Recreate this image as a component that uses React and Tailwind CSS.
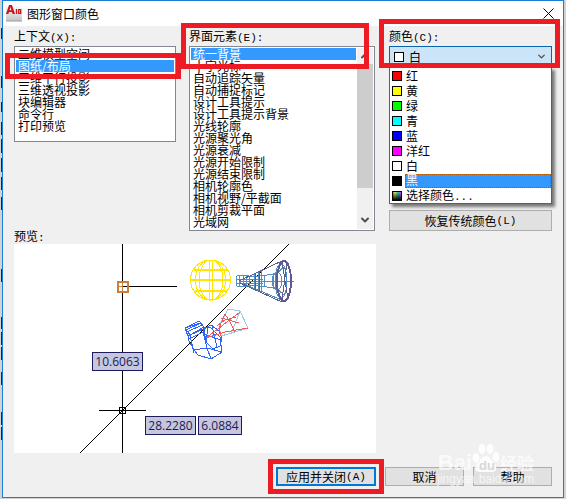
import React, { useState } from "react";
import { ChevronDown, ChevronUp } from "lucide-react";

const contexts = [
  "二维模型空间",
  "图纸/布局",
  "三维平行投影",
  "三维透视投影",
  "块编辑器",
  "命令行",
  "打印预览",
];

const elements = [
  "统一背景",
  "十字光标",
  "自动追踪矢量",
  "自动捕捉标记",
  "设计工具提示",
  "设计工具提示背景",
  "光线轮廓",
  "光源聚光角",
  "光源衰减",
  "光源开始限制",
  "光源结束限制",
  "相机轮廓色",
  "相机视野/平截面",
  "相机剪裁平面",
  "光域网",
];

const colors = [
  { name: "红", swatch: "bg-[#ff0000]" },
  { name: "黄", swatch: "bg-[#ffff00]" },
  { name: "绿", swatch: "bg-[#00ff00]" },
  { name: "青", swatch: "bg-[#00ffff]" },
  { name: "蓝", swatch: "bg-[#0000ff]" },
  { name: "洋红", swatch: "bg-[#ff00ff]" },
  { name: "白", swatch: "bg-white" },
  { name: "黑", swatch: "bg-black" },
  {
    name: "选择颜色",
    more: true,
    swatch:
      "bg-[linear-gradient(transparent,black),linear-gradient(90deg,#ff6060,#f0f060,#40e060,#40a0ff,#e040ff)]",
  },
];

// [top, height] of what shows of the drawing window behind the dialog
const marks = [
  [28, 11],
  [76, 12],
  [102, 10],
  [122, 13],
  [139, 14],
  [158, 14],
  [177, 13],
  [197, 13],
  [269, 13],
  [317, 12],
  [332, 13],
  [347, 13],
  [372, 13],
  [412, 13],
  [427, 13],
];

// Access key shown after a caption, e.g. (X):
function Key({ children }) {
  return <span className="font-['Liberation_Mono'] text-[11px]">{children}</span>;
}

function Highlight({ className }) {
  return (
    <div
      className={`pointer-events-none absolute z-20 border-[5px] border-[#ed1c24] ${className}`}
    />
  );
}

function ListBox({ labelledBy, items, value, onChange }) {
  return (
    <ul
      role="listbox"
      aria-labelledby={labelledBy}
      className="min-w-0 flex-1 overflow-hidden bg-white p-px"
    >
      {items.map((item) => (
        <li key={item} role="option" aria-selected={item === value}>
          <button
            onClick={() => onChange(item)}
            className={`block h-3 w-full pl-[2px] text-left leading-[10px] whitespace-nowrap ${
              item === value ? "bg-[#3399ff] text-white" : ""
            }`}
          >
            {item}
          </button>
        </li>
      ))}
    </ul>
  );
}

function DialogButton({ children, className }) {
  return (
    <button
      className={`flex items-center justify-center bg-[#e1e1e1] text-[12px] leading-[12px] whitespace-nowrap ${className}`}
    >
      {children}
    </button>
  );
}

function AppLogo() {
  return (
    <svg width="16" height="17" viewBox="0 0 16 17" aria-hidden="true">
      <defs>
        <linearGradient id="logo" x1="0" y1="0" x2="0" y2="1">
          <stop offset="0" stopColor="#fafafa" />
          <stop offset="1" stopColor="#c4c4c4" />
        </linearGradient>
      </defs>
      <path d="M0 1h13l3 3v12H0z" fill="url(#logo)" />
      <path d="M0 16h16" stroke="#9c9c9c" />
      <path
        d="M0 9L3 0h3l3 9H6.500L6 7H3l-.6 2zM3.500 5.300h2L4.500 2z"
        fill="#c9151e"
        fillRule="evenodd"
      />
      <path d="M10.500 4v5M12.700 4.700h2v3.600h-2z" fill="none" stroke="#c9151e" strokeWidth="1.3" />
    </svg>
  );
}

function Preview() {
  return (
    <svg width="362" height="209" viewBox="0 0 362 209" className="block" aria-hidden="true">
      <g fill="none" shapeRendering="crispEdges">
        <path d="M108.500 0V209M109 42.500H163M85 166.500H132" stroke="#000" />
        <rect x="105.500" y="163.500" width="6" height="6" stroke="#000" />
        <rect x="104" y="38" width="10" height="10" stroke="#c87f3c" strokeWidth="2" />
        <path d="M105 42.500H109M108.500 39V47" stroke="#c87f3c" />
      </g>
      <path d="M66 209L275 0" stroke="#000" />

      {/* light source */}
      <g fill="none" stroke="#ffe600" shapeRendering="crispEdges">
        <circle cx="196.500" cy="36" r="20" />
        <ellipse cx="196.500" cy="36" rx="15" ry="20" />
        <ellipse cx="197" cy="36" rx="12" ry="20" />
        <path d="M195.500 16V57M198.500 16V57" />
        <path d="M180 26H214M177 36H217M181 46.500H213" strokeWidth="2" />
      </g>

      {/* spotlight cone */}
      <g fill="none" stroke="#4f8fc4" shapeRendering="crispEdges">
        <rect x="222.500" y="31.500" width="13" height="11" rx="2" />
        <path d="M225.500 31V43M229.500 31V43M232.500 31V43M223 35.500H249M223 39.500H249" />
        <path d="M225 37L270 16M225 38L270 57M225 37.500H280M236 33L262 30L270 23M236 41L262 44L270 51" />
        <path d="M240 29V46M244 27V48M247 26V49M250 31V43M259 29V45" />
        <ellipse cx="263" cy="37" rx="5" ry="9" />
        <ellipse cx="267" cy="37" rx="6" ry="17" />
      </g>
      <g fill="none" stroke="#5c5a91" shapeRendering="crispEdges">
        <ellipse cx="270" cy="37" rx="7" ry="20" strokeWidth="2" />
        <path d="M225 37L270 16M226 39L268 58M241 30V45M245 28V48M273 18L268 56M268 18L274 55" />
      </g>

      {/* camera and its frustum */}
      <g fill="none" stroke="#2f63f5" shapeRendering="crispEdges">
        <path d="M171 84L185 77L190 83L176 91ZM171 84L175 95L189 88L190 83M173 88L188 81M174 92L189 85" />
        <path d="M171 84L186 79M172 86L187 79M176 91L190 85" />
        <path d="M174 95L180 106L184 111L197 115L208 108L206 93L197 84L190 83M176 91L180 109M180 106L193 104L208 108M193 104L189 88M197 115L193 104" />
        <path d="M190 85L197 81L205 87L208 94L206 102L199 105L192 98ZM194 83L192 98M198 82L203 103M190 90L207 96" />
      </g>
      <g fill="none" stroke="#9cc8ea" shapeRendering="crispEdges">
        <path d="M214 65L226 67L234 84L221 88L207 92L205 82L214 65M226 67L217 90" />
      </g>
      <g fill="none" stroke="#f05a5a" shapeRendering="crispEdges">
        <path d="M192 94L226 68M192 94L211 88L234 84M211 70L205 84L207 92M211 70L217 80L221 88M222 73L211 76L203 82M207 74L225 79" />
      </g>
    </svg>
  );
}

function Tooltip({ children, className }) {
  return (
    <div
      className={`absolute flex h-[19px] items-center justify-center border border-[#1b1a5e] bg-[#c6c7dc] font-['Open_Sans'] text-[12px] leading-[12px] text-[#1b1a5e] ${className}`}
    >
      {children}
    </div>
  );
}

function Watermark() {
  return (
    <div className="pointer-events-none absolute right-[29px] bottom-3 z-10 flex flex-col items-end font-['Liberation_Sans'] whitespace-nowrap text-white/70">
      <div className="flex items-end text-[22px] leading-[20px] font-bold">
        <span>Bai</span>
        <svg width="28" height="30" viewBox="0 0 28 30" aria-hidden="true">
          <g fill="#fff" fillOpacity=".85">
            <ellipse cx="4" cy="15" rx="3.500" ry="5" />
            <ellipse cx="10" cy="6" rx="3.500" ry="5" />
            <ellipse cx="18" cy="6" rx="3.500" ry="5" />
            <ellipse cx="24" cy="14" rx="3.500" ry="5" />
            <path d="M14 13c4 0 5 4 8 7s4 9-2 9H8c-6 0-6-5-3-8s5-8 9-8z" />
          </g>
          <text x="7" y="27" fontSize="13" fill="#d8d8d8">
            du
          </text>
        </svg>
        <span className="font-['Noto_Sans_CJK_SC'] text-[17px]">经验</span>
      </div>
      <span className="text-[12px] leading-[12px]">jingyan.baidu.com</span>
    </div>
  );
}

function App() {
  const [context, setContext] = useState("图纸/布局");
  const [element, setElement] = useState("统一背景");
  const [color, setColor] = useState("白");

  return (
    <div className="relative min-h-screen bg-[#d2d2d2] pr-[2px] pb-px pl-[2px] font-['Noto_Sans_CJK_SC',sans-serif] text-[12px] leading-[12px] text-black">
      {marks.map(([top, height]) => (
        <i key={top} className="absolute left-px w-px bg-[#1c2a36]" style={{ top, height }} />
      ))}
      <div className="relative min-h-[498px] border border-[#1a7fd4] bg-[#f0f0f0]">
        <header className="flex h-[25px] items-center gap-[5px] bg-white pr-[9px] pl-[3px]">
          <AppLogo />
          <h1 className="flex-1 leading-[10px]">图形窗口颜色</h1>
          <button aria-label="关闭">
            <svg width="11" height="11" viewBox="0 0 11 11" stroke="#000">
              <path d="M.5.5l10 10M10.500.5l-10 10" />
            </svg>
          </button>
        </header>

        <main className="px-[11px] pt-[5px]">
          <div className="grid grid-cols-[162fr_186fr_164fr] gap-x-[13px]">
            <section className="relative">
              <h2 id="context" className="h-[15px] leading-[10px]">
                上下文<Key>(X):</Key>
              </h2>
              <div className="flex h-24 border border-[#828790]">
                <ListBox
                  labelledBy="context"
                  items={contexts}
                  value={context}
                  onChange={setContext}
                />
              </div>
              <Highlight className="top-[22px] -right-[5px] -left-[9px] h-[26px]" />
            </section>

            <section className="relative">
              <h2 id="element" className="h-[15px] leading-[10px]">
                界面元素<Key>(E):</Key>
              </h2>
              <div className="flex h-[185px] border border-[#828790] bg-white">
                <ListBox
                  labelledBy="element"
                  items={elements}
                  value={element}
                  onChange={setElement}
                />
                <div className="my-px mr-px flex w-[16px] flex-col items-center bg-[#f0f0f0]">
                  <button aria-label="向上滚动" className="flex h-[16px] items-center">
                    <ChevronUp size={12} strokeWidth={4} color="#505050" />
                  </button>
                  <div className="h-[124px] w-full bg-[#cdcdcd]" />
                  <button aria-label="向下滚动" className="mt-auto flex h-[18px] items-center">
                    <ChevronDown size={12} strokeWidth={4} color="#505050" />
                  </button>
                </div>
              </div>
              <Highlight className="-top-[8px] right-[6px] -left-[8px] h-[46px]" />
            </section>

            <section className="relative flex flex-col pl-px">
              <label htmlFor="color" className="block h-[15px] leading-[10px]">
                颜色<Key>(C):</Key>
              </label>
              <div className="relative">
                <div className="flex h-[21px] items-center gap-[5px] border border-[#0a64ad] bg-[#cce4f7] px-1">
                  <span className="size-[10px] border border-black bg-white" />
                  <select
                    id="color"
                    value={color}
                    onChange={(e) => setColor(e.target.value)}
                    className="min-w-0 flex-1 appearance-none bg-transparent outline-none"
                  >
                    {colors.map((c) => (
                      <option key={c.name}>{c.name}</option>
                    ))}
                  </select>
                  <ChevronDown size={11} strokeWidth={3} color="#505050" />
                </div>
                <ul className="absolute top-[21px] right-0 left-0 z-10 border border-[#0078d7] bg-white shadow-[3px_3px_3px_rgba(0,0,0,0.5)]">
                  {colors.map((c) => (
                    <li key={c.name}>
                      <button
                        onClick={() => setColor(c.name)}
                        className="flex h-[15px] w-full items-center gap-[3px] pl-[2px] text-left"
                      >
                        <span className={`size-[10px] border border-black ${c.swatch}`} />
                        <span
                          className={
                            c.name === "黑"
                              ? "h-[14px] flex-1 border border-dotted border-[#b35900] bg-[#3399ff] leading-[10px] text-white"
                              : "flex-1 pl-px"
                          }
                        >
                          {c.name}
                          {c.more && <Key>...</Key>}
                        </span>
                      </button>
                    </li>
                  ))}
                </ul>
              </div>
              <DialogButton className="mt-auto h-[21px] border border-[#adadad]">
                恢复传统颜色<Key>(L)</Key>
              </DialogButton>
              <Highlight className="-top-[12px] -right-[8px] -left-[9px] h-[49px]" />
            </section>
          </div>

          <p className="h-[13px] leading-[10px]">
            预览<Key>:</Key>
          </p>
          <div className="relative h-[209px] w-[362px] bg-white">
            <Preview />
            <Tooltip className="top-[108px] left-[78px] w-[51px]">10.6063</Tooltip>
            <Tooltip className="top-[172px] left-[131px] w-[51px]">28.2280</Tooltip>
            <Tooltip className="top-[172px] left-[184px] w-[44px]">6.0884</Tooltip>
          </div>
        </main>

        <footer className="flex justify-end gap-[9px] pt-[14px] pr-[11px]">
          <div className="relative">
            <DialogButton className="h-[19px] w-[100px] border-2 border-[#0078d7]">
              应用并关闭<Key>(A)</Key>
            </DialogButton>
            <Highlight className="-inset-[8px]" />
          </div>
          <DialogButton className="h-[19px] w-[79px] border border-[#adadad]">取消</DialogButton>
          <DialogButton className="h-[19px] w-[79px] border border-[#adadad]">帮助</DialogButton>
        </footer>
        <Watermark />
      </div>
    </div>
  );
}

export default App;
